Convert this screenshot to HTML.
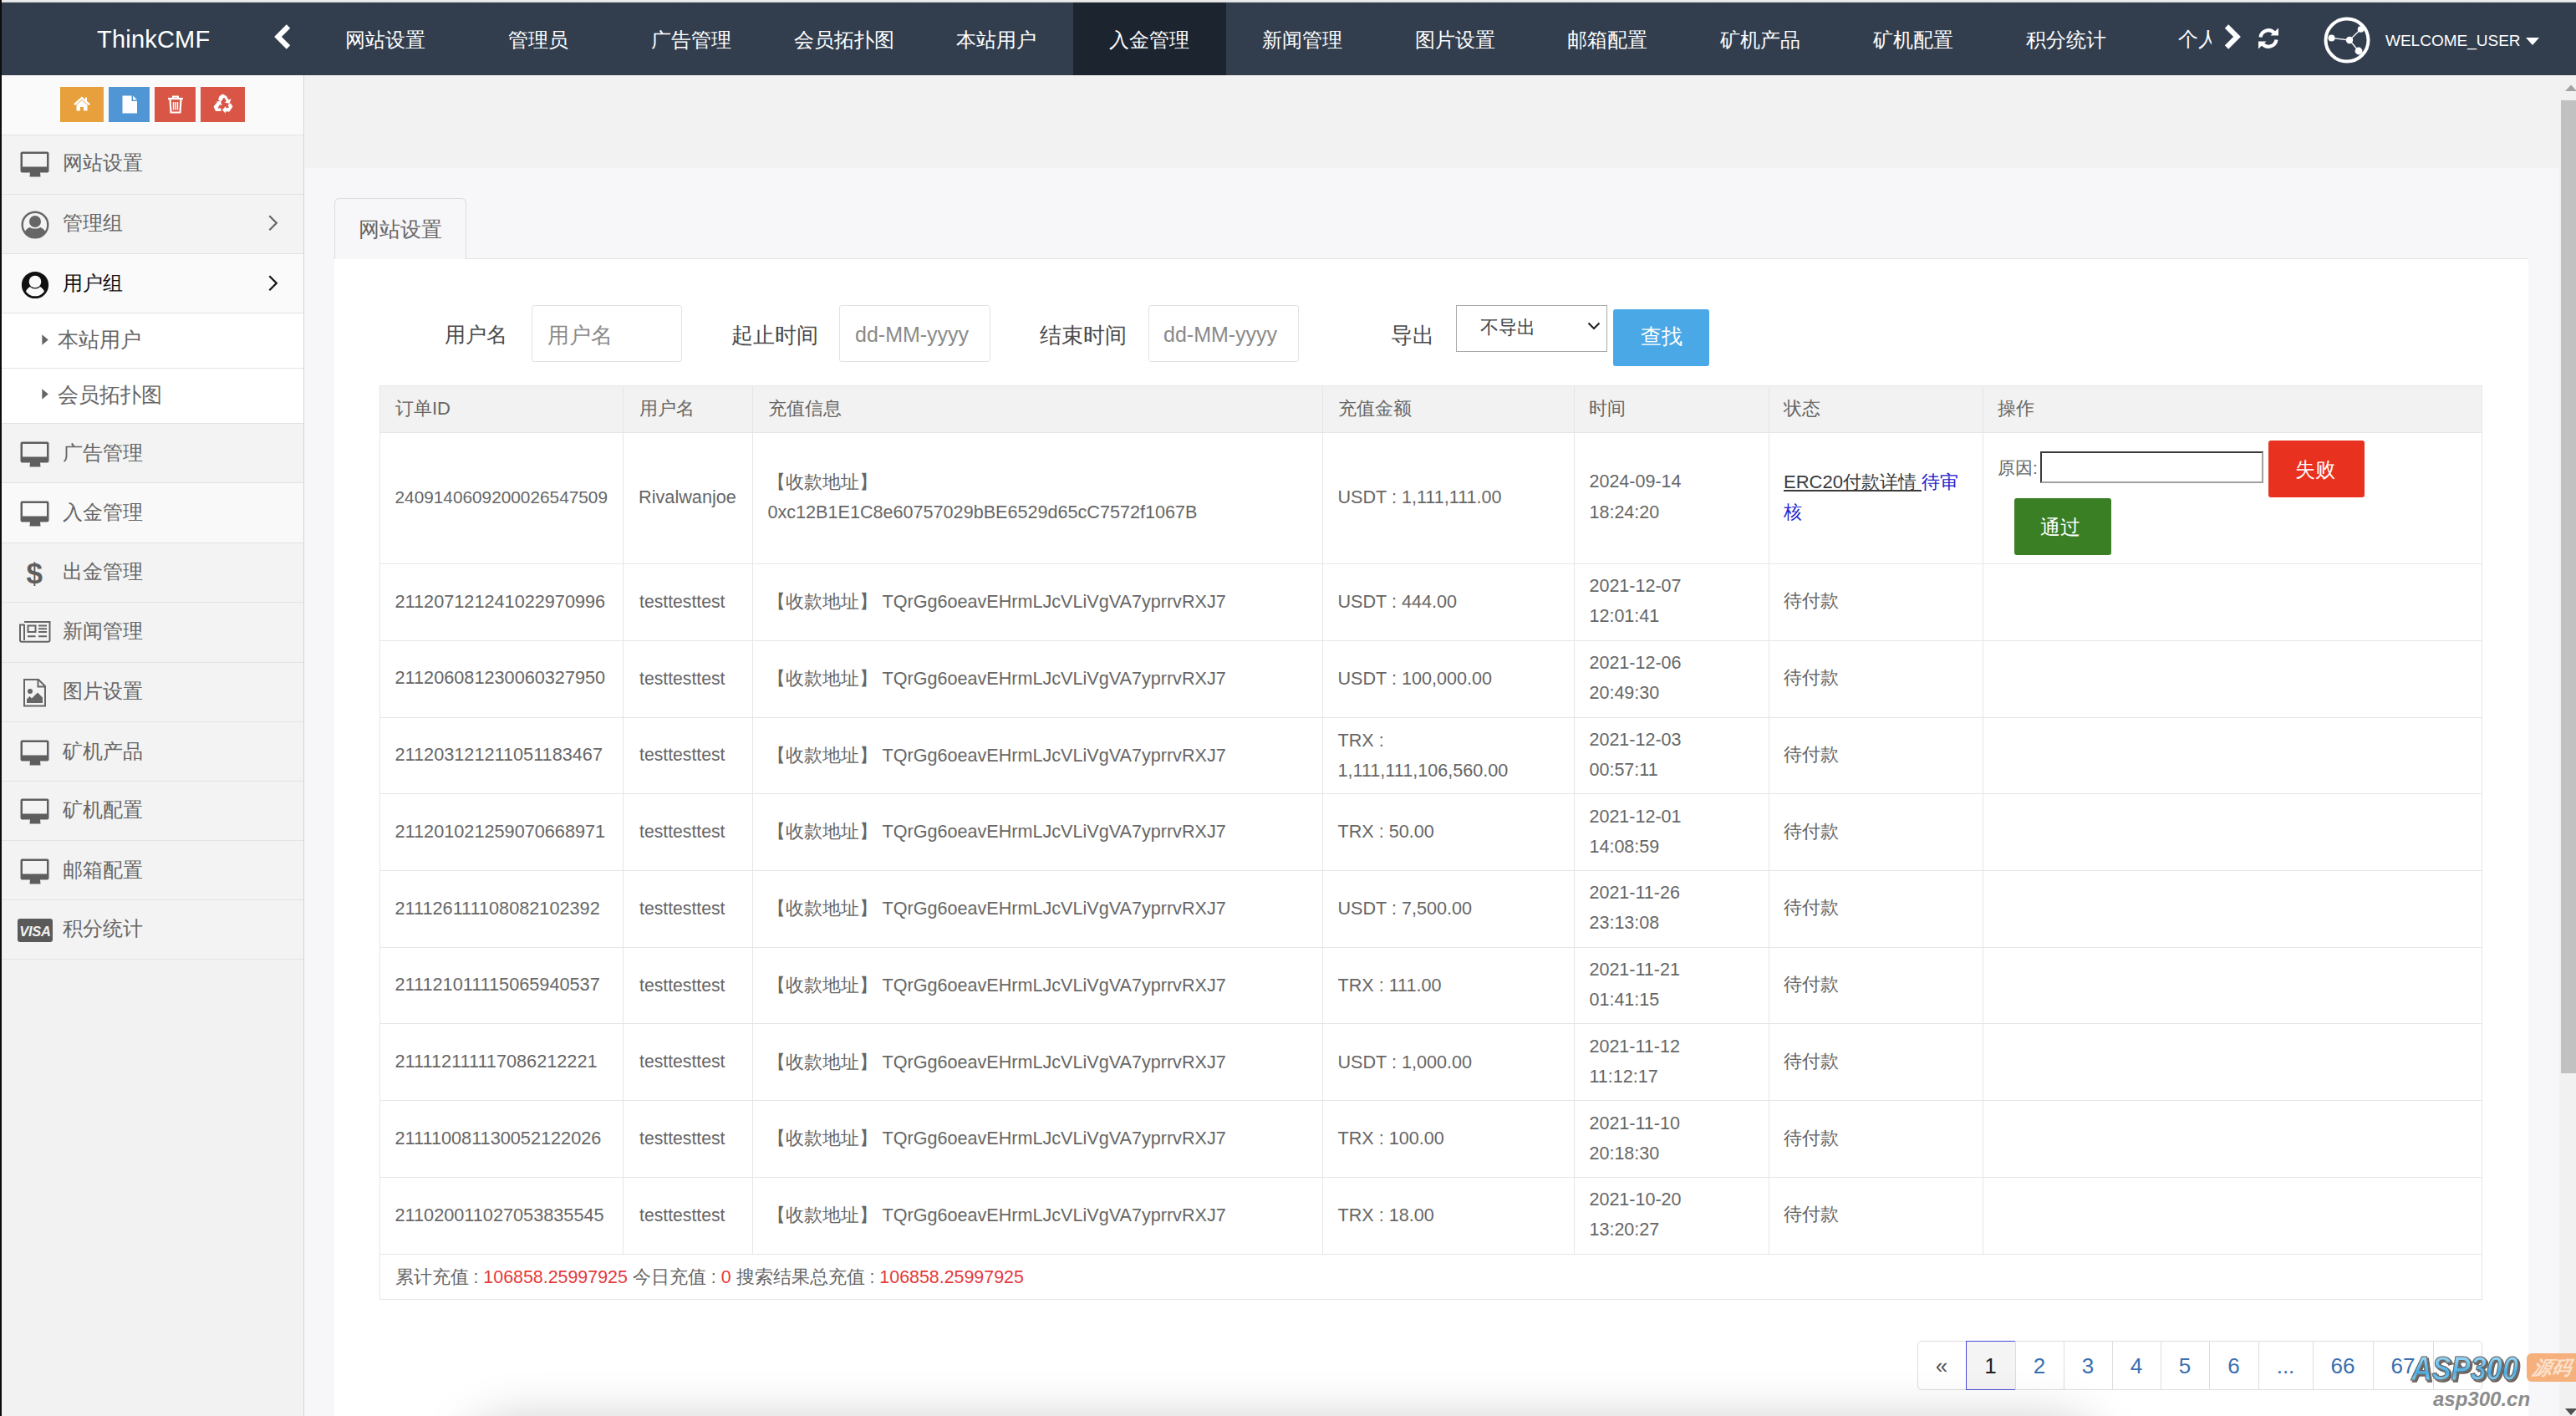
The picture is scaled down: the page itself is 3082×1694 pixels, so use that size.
<!DOCTYPE html>
<html><head><meta charset="utf-8">
<style>
*{box-sizing:border-box;margin:0;padding:0}
html,body{width:3082px;height:1694px;overflow:hidden}
body{position:relative;background:#f7f7f9;font-family:"Liberation Sans",sans-serif;color:#666}
.a{position:absolute}
.t{position:absolute;white-space:nowrap;line-height:40px;height:40px}
.hl{position:absolute;height:1px;background:#e6e6e6}
.vl{position:absolute;width:1px;background:#e6e6e6}
svg{position:absolute;overflow:visible}
</style></head><body>
<div class="a" style="left:0;top:0;width:3082px;height:3px;background:linear-gradient(#f0f0f0,#d6d8d9)"></div>
<div class="a" style="left:0;top:3px;width:3082px;height:87px;background:#323e4e"></div>
<div class="t" style="left:370.0px;top:27.5px;width:182.75px;text-align:center;font-size:24px;color:#fff">网站设置</div>
<div class="t" style="left:552.8px;top:27.5px;width:182.75px;text-align:center;font-size:24px;color:#fff">管理员</div>
<div class="t" style="left:735.5px;top:27.5px;width:182.75px;text-align:center;font-size:24px;color:#fff">广告管理</div>
<div class="t" style="left:918.2px;top:27.5px;width:182.75px;text-align:center;font-size:24px;color:#fff">会员拓扑图</div>
<div class="t" style="left:1101.0px;top:27.5px;width:182.75px;text-align:center;font-size:24px;color:#fff">本站用户</div>
<div class="a" style="left:1283.8px;top:3px;width:182.75px;height:87px;background:#1c2430"></div>
<div class="t" style="left:1283.8px;top:27.5px;width:182.75px;text-align:center;font-size:24px;color:#fff">入金管理</div>
<div class="t" style="left:1466.5px;top:27.5px;width:182.75px;text-align:center;font-size:24px;color:#fff">新闻管理</div>
<div class="t" style="left:1649.2px;top:27.5px;width:182.75px;text-align:center;font-size:24px;color:#fff">图片设置</div>
<div class="t" style="left:1832.0px;top:27.5px;width:182.75px;text-align:center;font-size:24px;color:#fff">邮箱配置</div>
<div class="t" style="left:2014.8px;top:27.5px;width:182.75px;text-align:center;font-size:24px;color:#fff">矿机产品</div>
<div class="t" style="left:2197.5px;top:27.5px;width:182.75px;text-align:center;font-size:24px;color:#fff">矿机配置</div>
<div class="t" style="left:2380.2px;top:27.5px;width:182.75px;text-align:center;font-size:24px;color:#fff">积分统计</div>
<div class="a" style="left:2606px;top:20px;width:40px;height:60px;overflow:hidden"><div class="t" style="left:0;top:7px;font-size:24px;color:#fff">个人中心</div></div>
<div class="t" style="left:116px;top:26.7px;font-size:29px;color:#fff;letter-spacing:0.2px">ThinkCMF</div>
<svg style="left:326px;top:28px" width="24" height="34" viewBox="0 0 24 34"><path d="M19 3.5 L6.5 16 L19 28.5" fill="none" stroke="#fff" stroke-width="6.2" stroke-linecap="butt" stroke-linejoin="miter"/></svg>
<svg style="left:2659px;top:28px" width="24" height="34" viewBox="0 0 24 34"><path d="M5 3.5 L17.5 16 L5 28.5" fill="none" stroke="#fff" stroke-width="6.2" stroke-linejoin="miter"/></svg>
<svg style="left:2700px;top:33px" width="28" height="26" viewBox="0 0 28 26">
<path d="M4.5 11.5 A9.5 9.5 0 0 1 21 6.5" fill="none" stroke="#fff" stroke-width="4.2"/>
<path d="M16.5 9.5 L26 9.5 L26 0.5 Z" fill="#fff"/>
<path d="M23.5 14.5 A9.5 9.5 0 0 1 7 19.5" fill="none" stroke="#fff" stroke-width="4.2"/>
<path d="M11.5 16.5 L2 16.5 L2 25.5 Z" fill="#fff"/>
</svg>
<svg style="left:2780px;top:20px" width="56" height="56" viewBox="0 0 56 56">
<circle cx="28" cy="28" r="25.5" fill="none" stroke="#fff" stroke-width="4"/>
<path d="M9.5 25.5 L31 28 L44.5 15 M31 28 L42 41" fill="none" stroke="#fff" stroke-width="1.6" opacity="0.9"/>
<circle cx="9.5" cy="25.5" r="4" fill="#fff"/>
<circle cx="31" cy="28" r="4.2" fill="#fff"/>
<circle cx="44.5" cy="15" r="3.8" fill="#fff"/>
<circle cx="42" cy="41" r="4.4" fill="#fff"/>
</svg>
<div class="t" style="left:2854px;top:29.2px;font-size:19px;color:#fff;">WELCOME_USER</div>
<svg style="left:3022px;top:45px" width="16" height="9" viewBox="0 0 16 9"><path d="M0 0 L16 0 L8 9 Z" fill="#fff"/></svg>
<div class="a" style="left:0;top:90px;width:364px;height:1604px;background:#f2f2f2;border-right:1px solid #d6d6d6"></div>
<div class="a" style="left:0;top:90px;width:363px;height:71px;background:#fafafa"></div>
<div class="a" style="left:72px;top:104px;width:52px;height:42px;background:#e8a03c"></div>
<div class="a" style="left:130px;top:104px;width:49px;height:42px;background:#5096d4"></div>
<div class="a" style="left:185px;top:104px;width:49px;height:42px;background:#d95545"></div>
<div class="a" style="left:240px;top:104px;width:53px;height:42px;background:#d95545"></div>
<svg style="left:87px;top:114px" width="22" height="20" viewBox="0 0 22 20">
<path d="M11 1.5 L1 10.5 L3 12 L11 5 L19 12 L21 10.5 L17 7 L17 2.5 L15 2.5 L15 5.2 Z" fill="#fff"/>
<path d="M4.5 11.5 L11 6 L17.5 11.5 L17.5 18.5 L13 18.5 L13 14 L9 14 L9 18.5 L4.5 18.5 Z" fill="#fff"/>
</svg>
<svg style="left:145px;top:113px" width="20" height="24" viewBox="0 0 20 24">
<path d="M1.5 1.5 L12.5 1.5 L12.5 8 L19 8 L19 22.5 L1.5 22.5 Z" fill="#fff"/>
<path d="M14 1.5 L19 6.5 L14 6.5 Z" fill="#fff"/>
</svg>
<svg style="left:199px;top:113px" width="22" height="24" viewBox="0 0 22 24">
<path d="M2 5 L20 5" stroke="#fff" stroke-width="2.2"/>
<path d="M8 5 L8 2.5 L14 2.5 L14 5" fill="none" stroke="#fff" stroke-width="2"/>
<path d="M4.5 6 L5.5 21.5 L16.5 21.5 L17.5 6" fill="none" stroke="#fff" stroke-width="2.2"/>
<path d="M8.5 9 L8.5 18.5 M11 9 L11 18.5 M13.5 9 L13.5 18.5" stroke="#fff" stroke-width="1.5"/>
</svg>
<svg style="left:254px;top:112px" width="26" height="25" viewBox="0 0 26 25">
<g fill="#fff">
<path d="M8.5 3 L12.5 0.5 L17 3 L19.5 7.5 L22.5 6 L20.5 12 L14.5 10.5 L17 9 L14 4.5 L10.5 9.5 L7 7.5 Z"/>
<path d="M6 10 L1.5 15.5 L4 21 L10.5 21 L10.5 17.5 L6.5 17.5 L9 13 L11.5 14.5 L10 8.5 L4 10 Z"/>
<path d="M15 17.5 L15 21.5 L20.5 21.5 L24.5 15.5 L22 11.5 L18.5 13.5 L20 16.5 L16.5 17.5 L16 15 L12 19.5 L16 24 Z"/>
</g></svg>
<div class="a" style="left:0;top:161px;width:363px;height:71px;background:#f3f3f3;border-top:1px solid #e3e3e3"></div>
<div class="a" style="left:0;top:232px;width:363px;height:71px;background:#f3f3f3;border-top:1px solid #e3e3e3"></div>
<div class="a" style="left:0;top:303px;width:363px;height:71px;background:#fafafa;border-top:1px solid #e3e3e3"></div>
<div class="a" style="left:0;top:374px;width:363px;height:66px;background:#ffffff;border-top:1px solid #e3e3e3"></div>
<div class="a" style="left:0;top:440px;width:363px;height:66px;background:#ffffff;border-top:1px solid #e3e3e3"></div>
<div class="a" style="left:0;top:506px;width:363px;height:71px;background:#f3f3f3;border-top:1px solid #e3e3e3"></div>
<div class="a" style="left:0;top:577px;width:363px;height:72px;background:#f9f9f9;border-top:1px solid #e3e3e3"></div>
<div class="a" style="left:0;top:649px;width:363px;height:71px;background:#f3f3f3;border-top:1px solid #e3e3e3"></div>
<div class="a" style="left:0;top:720px;width:363px;height:72px;background:#f3f3f3;border-top:1px solid #e3e3e3"></div>
<div class="a" style="left:0;top:792px;width:363px;height:71px;background:#f3f3f3;border-top:1px solid #e3e3e3"></div>
<div class="a" style="left:0;top:863px;width:363px;height:71px;background:#f3f3f3;border-top:1px solid #e3e3e3"></div>
<div class="a" style="left:0;top:934px;width:363px;height:71px;background:#f3f3f3;border-top:1px solid #e3e3e3"></div>
<div class="a" style="left:0;top:1005px;width:363px;height:71px;background:#f3f3f3;border-top:1px solid #e3e3e3"></div>
<div class="a" style="left:0;top:1076px;width:363px;height:71px;background:#f3f3f3;border-top:1px solid #e3e3e3"></div>
<div class="a" style="left:0;top:1147px;width:363px;height:1px;background:#e3e3e3"></div>
<div class="t" style="left:75px;top:174.5px;font-size:24px;color:#666;">网站设置</div>
<svg style="left:24px;top:180.5px" width="36" height="31" viewBox="0 0 36 31">
<path d="M2.5 0.5 H32.5 A2 2 0 0 1 34.5 2.5 V23.5 A2 2 0 0 1 32.5 25.5 H2.5 A2 2 0 0 1 0.5 23.5 V2.5 A2 2 0 0 1 2.5 0.5 Z M3 3 V18.5 H32 V3 Z" fill="#5e5e5e" fill-rule="evenodd"/>
<path d="M12 25 H24 L24.5 30.5 H11.5 Z" fill="#5e5e5e"/></svg>
<div class="t" style="left:75px;top:247.0px;font-size:24px;color:#666;">管理组</div>
<svg style="left:25px;top:252.0px" width="34" height="34" viewBox="0 0 34 34">
<defs><clipPath id="cc1"><circle cx="17" cy="17" r="15"/></clipPath></defs>
<circle cx="17" cy="17" r="15.3" fill="none" stroke="#666" stroke-width="2.4"/>
<circle cx="17" cy="13" r="7" fill="#666"/>
<path d="M3 34 C3 24 8 20.5 11 20 C13 22 21 22 23 20 C26 20.5 31 24 31 34 Z" fill="#666" clip-path="url(#cc1)"/>
</svg>
<svg style="left:320px;top:257.0px" width="14" height="20" viewBox="0 0 14 20"><path d="M2.3 1.3 L10.8 9.8 L2.3 18.3" fill="none" stroke="#666" stroke-width="2.2"/></svg>
<div class="t" style="left:75px;top:318.7px;font-size:24px;color:#111;">用户组</div>
<svg style="left:25px;top:323.7px" width="34" height="34" viewBox="0 0 34 34">
<defs><clipPath id="cc2"><circle cx="17" cy="17" r="13.3"/></clipPath></defs>
<circle cx="17" cy="17" r="16.1" fill="#111"/>
<path d="M4 34 C4 24 9 19.5 11.5 19 C13.5 21.5 20.5 21.5 22.5 19 C25 19.5 30 24 30 34 Z" fill="#fafafa" clip-path="url(#cc2)"/>
<circle cx="17" cy="13" r="8.6" fill="#111"/>
<circle cx="17" cy="13" r="7.3" fill="#fafafa"/>
</svg>
<svg style="left:320px;top:328.7px" width="14" height="20" viewBox="0 0 14 20"><path d="M2.3 1.3 L10.8 9.8 L2.3 18.3" fill="none" stroke="#111" stroke-width="2.2"/></svg>
<div class="t" style="left:75px;top:521.5px;font-size:24px;color:#666;">广告管理</div>
<svg style="left:24px;top:527.5px" width="36" height="31" viewBox="0 0 36 31">
<path d="M2.5 0.5 H32.5 A2 2 0 0 1 34.5 2.5 V23.5 A2 2 0 0 1 32.5 25.5 H2.5 A2 2 0 0 1 0.5 23.5 V2.5 A2 2 0 0 1 2.5 0.5 Z M3 3 V18.5 H32 V3 Z" fill="#5e5e5e" fill-rule="evenodd"/>
<path d="M12 25 H24 L24.5 30.5 H11.5 Z" fill="#5e5e5e"/></svg>
<div class="t" style="left:75px;top:593.2px;font-size:24px;color:#666;">入金管理</div>
<svg style="left:24px;top:599.2px" width="36" height="31" viewBox="0 0 36 31">
<path d="M2.5 0.5 H32.5 A2 2 0 0 1 34.5 2.5 V23.5 A2 2 0 0 1 32.5 25.5 H2.5 A2 2 0 0 1 0.5 23.5 V2.5 A2 2 0 0 1 2.5 0.5 Z M3 3 V18.5 H32 V3 Z" fill="#5e5e5e" fill-rule="evenodd"/>
<path d="M12 25 H24 L24.5 30.5 H11.5 Z" fill="#5e5e5e"/></svg>
<div class="t" style="left:75px;top:663.7px;font-size:24px;color:#666;">出金管理</div>
<div class="t" style="left:31.5px;top:665.7px;font-size:35px;font-weight:bold;color:#5e5e5e;line-height:40px">$</div>
<div class="t" style="left:75px;top:734.6px;font-size:24px;color:#666;">新闻管理</div>
<svg style="left:23px;top:742.6px" width="38" height="26" viewBox="0 0 38 26">
<path d="M6 1 H36.5 V23 A1.8 1.8 0 0 1 34.7 24.8 H3 A2 2 0 0 1 1 22.8 V4.5 H6" fill="none" stroke="#666" stroke-width="2"/>
<path d="M6 4 V23" stroke="#666" stroke-width="2"/>
<rect x="10.5" y="5.5" width="9" height="7.5" fill="none" stroke="#666" stroke-width="2"/>
<path d="M23 5.5 H33 M23 9.3 H33 M23 13 H33 M10 18.3 H19.5 M23 18.3 H33" stroke="#666" stroke-width="2"/>
</svg>
<div class="t" style="left:75px;top:807.3px;font-size:24px;color:#666;">图片设置</div>
<svg style="left:28px;top:811.8px" width="28" height="34" viewBox="0 0 28 34">
<path d="M1 1 H18 L26 9 V32.5 H1 Z" fill="none" stroke="#666" stroke-width="2"/>
<path d="M17.5 1 V9.5 H26" fill="none" stroke="#666" stroke-width="2"/>
<circle cx="8" cy="15" r="3" fill="#666"/>
<path d="M4 29 V24.5 L7.5 21 L10 23.5 L17 16.5 L23 22.5 V29 Z" fill="#666"/>
</svg>
<div class="t" style="left:75px;top:878.8px;font-size:24px;color:#666;">矿机产品</div>
<svg style="left:24px;top:884.8px" width="36" height="31" viewBox="0 0 36 31">
<path d="M2.5 0.5 H32.5 A2 2 0 0 1 34.5 2.5 V23.5 A2 2 0 0 1 32.5 25.5 H2.5 A2 2 0 0 1 0.5 23.5 V2.5 A2 2 0 0 1 2.5 0.5 Z M3 3 V18.5 H32 V3 Z" fill="#5e5e5e" fill-rule="evenodd"/>
<path d="M12 25 H24 L24.5 30.5 H11.5 Z" fill="#5e5e5e"/></svg>
<div class="t" style="left:75px;top:949.4px;font-size:24px;color:#666;">矿机配置</div>
<svg style="left:24px;top:955.4px" width="36" height="31" viewBox="0 0 36 31">
<path d="M2.5 0.5 H32.5 A2 2 0 0 1 34.5 2.5 V23.5 A2 2 0 0 1 32.5 25.5 H2.5 A2 2 0 0 1 0.5 23.5 V2.5 A2 2 0 0 1 2.5 0.5 Z M3 3 V18.5 H32 V3 Z" fill="#5e5e5e" fill-rule="evenodd"/>
<path d="M12 25 H24 L24.5 30.5 H11.5 Z" fill="#5e5e5e"/></svg>
<div class="t" style="left:75px;top:1020.6px;font-size:24px;color:#666;">邮箱配置</div>
<svg style="left:24px;top:1026.6px" width="36" height="31" viewBox="0 0 36 31">
<path d="M2.5 0.5 H32.5 A2 2 0 0 1 34.5 2.5 V23.5 A2 2 0 0 1 32.5 25.5 H2.5 A2 2 0 0 1 0.5 23.5 V2.5 A2 2 0 0 1 2.5 0.5 Z M3 3 V18.5 H32 V3 Z" fill="#5e5e5e" fill-rule="evenodd"/>
<path d="M12 25 H24 L24.5 30.5 H11.5 Z" fill="#5e5e5e"/></svg>
<div class="t" style="left:75px;top:1091.2px;font-size:24px;color:#666;">积分统计</div>
<div class="a" style="left:21px;top:1099.2px;width:41.5px;height:27.5px;background:#5a5a5a;border-radius:3px"></div>
<div class="t" style="left:23px;top:1093.7px;width:38px;text-align:center;font-size:16.5px;font-weight:bold;font-style:italic;color:#f3f3f3;letter-spacing:-0.3px">VISA</div>
<div class="t" style="left:69px;top:386.1px;font-size:25px;color:#666;">本站用户</div>
<svg style="left:50px;top:399.6px" width="9" height="13" viewBox="0 0 9 13"><path d="M0.3 0.3 L7.8 6.5 L0.3 12.7 Z" fill="#666"/></svg>
<div class="t" style="left:69px;top:451.7px;font-size:25px;color:#666;">会员拓扑图</div>
<svg style="left:50px;top:465.2px" width="9" height="13" viewBox="0 0 9 13"><path d="M0.3 0.3 L7.8 6.5 L0.3 12.7 Z" fill="#666"/></svg>
<div class="a" style="left:364px;top:90px;width:2698px;height:111px;background:#f2f2f2"></div>
<div class="a" style="left:3062px;top:90px;width:20px;height:1604px;background:#f1f1f1"></div>
<div class="a" style="left:3064px;top:120px;width:18px;height:1164px;background:#c1c1c1"></div>
<svg style="left:3069px;top:100px" width="14" height="10" viewBox="0 0 14 10"><path d="M0 9 L7 1.5 L14 9 Z" fill="#a3a3a3"/></svg>
<svg style="left:3069px;top:1685px" width="14" height="10" viewBox="0 0 14 10"><path d="M0 0 L7 8 L14 0 Z" fill="#505050"/></svg>
<div class="a" style="left:400px;top:309px;width:2625px;height:1400px;background:#fff;border-top:1px solid #e3e3e3"></div>
<div class="a" style="left:400px;top:237px;width:158px;height:73px;border:1px solid #dcdcdc;border-bottom:none;border-radius:6px 6px 0 0;background:#f7f7f9"></div>
<div class="t" style="left:429px;top:253.8px;font-size:25px;color:#666;">网站设置</div>
<div class="t" style="left:532px;top:380.3px;font-size:25px;color:#4a4a4a;">用户名</div>
<div class="a" style="left:636px;top:365px;width:180px;height:68px;border:1px solid #e2e2e2;border-radius:3px;background:#fff"></div>
<div class="t" style="left:654.5px;top:380.6px;font-size:25.5px;color:#8a8a8a;">用户名</div>
<div class="t" style="left:875px;top:380.6px;font-size:25.5px;color:#4a4a4a;">起止时间</div>
<div class="a" style="left:1004px;top:365px;width:181px;height:68px;border:1px solid #e2e2e2;border-radius:3px;background:#fff"></div>
<div class="t" style="left:1023px;top:380.0px;font-size:25px;color:#8a8a8a;">dd-MM-yyyy</div>
<div class="t" style="left:1244px;top:380.6px;font-size:25.5px;color:#4a4a4a;">结束时间</div>
<div class="a" style="left:1374px;top:365px;width:180px;height:68px;border:1px solid #e2e2e2;border-radius:3px;background:#fff"></div>
<div class="t" style="left:1392px;top:380.0px;font-size:25px;color:#8a8a8a;">dd-MM-yyyy</div>
<div class="t" style="left:1664px;top:380.8px;font-size:25.5px;color:#4a4a4a;">导出</div>
<div class="a" style="left:1742px;top:365px;width:181px;height:56px;border:1px solid #a9a9a9;background:#fff"></div>
<div class="t" style="left:1771px;top:371.8px;font-size:21.5px;color:#444;">不导出</div>
<svg style="left:1899px;top:385px" width="16" height="10" viewBox="0 0 16 10"><path d="M1.5 1.5 L8 8 L14.5 1.5" fill="none" stroke="#222" stroke-width="2.2"/></svg>
<div class="a" style="left:1930px;top:370px;width:115px;height:68px;background:#4aa8e6;border-radius:3px"></div>
<div class="t" style="left:1963px;top:382.8px;font-size:24.5px;color:#fff;">查找</div>
<div class="a" style="left:454px;top:461px;width:2516px;height:56px;background:#f2f2f2"></div>
<div class="hl" style="left:454px;top:461px;width:2516px"></div>
<div class="hl" style="left:454px;top:517px;width:2516px"></div>
<div class="hl" style="left:454px;top:674px;width:2516px"></div>
<div class="hl" style="left:454px;top:766px;width:2516px"></div>
<div class="hl" style="left:454px;top:858px;width:2516px"></div>
<div class="hl" style="left:454px;top:949px;width:2516px"></div>
<div class="hl" style="left:454px;top:1041px;width:2516px"></div>
<div class="hl" style="left:454px;top:1133px;width:2516px"></div>
<div class="hl" style="left:454px;top:1224px;width:2516px"></div>
<div class="hl" style="left:454px;top:1316px;width:2516px"></div>
<div class="hl" style="left:454px;top:1408px;width:2516px"></div>
<div class="hl" style="left:454px;top:1500px;width:2516px"></div>
<div class="hl" style="left:454px;top:1554px;width:2516px"></div>
<div class="vl" style="left:454px;top:461px;height:1094px"></div>
<div class="vl" style="left:745px;top:461px;height:1039px"></div>
<div class="vl" style="left:900px;top:461px;height:1039px"></div>
<div class="vl" style="left:1582px;top:461px;height:1039px"></div>
<div class="vl" style="left:1883px;top:461px;height:1039px"></div>
<div class="vl" style="left:2116px;top:461px;height:1039px"></div>
<div class="vl" style="left:2372px;top:461px;height:1039px"></div>
<div class="vl" style="left:2969px;top:461px;height:1094px"></div>
<div class="t" style="left:473px;top:469.0px;font-size:22px;color:#666;">订单ID</div>
<div class="t" style="left:765px;top:469.0px;font-size:22px;color:#666;">用户名</div>
<div class="t" style="left:919px;top:469.0px;font-size:22px;color:#666;">充值信息</div>
<div class="t" style="left:1601px;top:469.0px;font-size:22px;color:#666;">充值金额</div>
<div class="t" style="left:1901px;top:469.0px;font-size:22px;color:#666;">时间</div>
<div class="t" style="left:2134px;top:469.0px;font-size:22px;color:#666;">状态</div>
<div class="t" style="left:2390px;top:469.0px;font-size:22px;color:#666;">操作</div>
<div class="t" style="left:472.5px;top:575.1px;font-size:20.8px;color:#666;">2409140609200026547509</div>
<div class="t" style="left:764px;top:575.4px;font-size:21.7px;color:#666;">Rivalwanjoe</div>
<div class="t" style="left:918px;top:556.5px;font-size:22px;color:#666;">【收款地址】</div>
<div class="t" style="left:918.5px;top:592.6px;font-size:21.6px;color:#666;">0xc12B1E1C8e60757029bBE6529d65cC7572f1067B</div>
<div class="t" style="left:1600.5px;top:575.4px;font-size:21.6px;color:#666;">USDT : 1,111,111.00</div>
<div class="t" style="left:1901.5px;top:555.9px;font-size:21.5px;color:#666;">2024-09-14</div>
<div class="t" style="left:1901.5px;top:592.5px;font-size:21.5px;color:#666;">18:24:20</div>
<div class="t" style="left:2134px;top:556.5px;font-size:22px;color:#333"><span style="text-decoration:underline;color:#3a3a3a">ERC20付款详情 </span><span style="color:#2222cc">待审</span></div>
<div class="t" style="left:2134px;top:593.0px;font-size:22px;color:#2222cc;">核</div>
<div class="t" style="left:2390px;top:539.5px;font-size:21px;color:#666;">原因:</div>
<div class="a" style="left:2441px;top:540px;width:267px;height:38px;border:2px solid #555;border-top-color:#3a3a3a;border-left-color:#3a3a3a;border-right-color:#a0a0a0;border-bottom-color:#a0a0a0;background:#fff"></div>
<div class="a" style="left:2714px;top:526.5px;width:115px;height:68px;background:#e8321f;border-radius:3px"></div>
<div class="t" style="left:2746px;top:542.0px;font-size:24px;color:#fff;">失败</div>
<div class="a" style="left:2409.5px;top:595.5px;width:116px;height:68px;background:#3a7f24;border-radius:3px"></div>
<div class="t" style="left:2441px;top:610.5px;font-size:24px;color:#fff;">通过</div>
<div class="t" style="left:472.5px;top:699.6px;font-size:21.7px;color:#666;">211207121241022970996</div>
<div class="t" style="left:765px;top:699.8px;font-size:21.2px;color:#666;">testtesttest</div>
<div class="t" style="left:918px;top:700.1px;font-size:22px;color:#666;">【收款地址】</div>
<div class="t" style="left:1055.5px;top:700.0px;font-size:21.6px;color:#666;">TQrGg6oeavEHrmLJcVLiVgVA7yprrvRXJ7</div>
<div class="t" style="left:1600.5px;top:700.0px;font-size:21.6px;color:#666;">USDT : 444.00</div>
<div class="t" style="left:1901.5px;top:681.2px;font-size:21.5px;color:#666;">2021-12-07</div>
<div class="t" style="left:1901.5px;top:717.2px;font-size:21.5px;color:#666;">12:01:41</div>
<div class="t" style="left:2133.5px;top:699.3px;font-size:22px;color:#666;">待付款</div>
<div class="t" style="left:472.5px;top:791.4px;font-size:21.7px;color:#666;">211206081230060327950</div>
<div class="t" style="left:765px;top:791.6px;font-size:21.2px;color:#666;">testtesttest</div>
<div class="t" style="left:918px;top:791.9px;font-size:22px;color:#666;">【收款地址】</div>
<div class="t" style="left:1055.5px;top:791.7px;font-size:21.6px;color:#666;">TQrGg6oeavEHrmLJcVLiVgVA7yprrvRXJ7</div>
<div class="t" style="left:1600.5px;top:791.7px;font-size:21.6px;color:#666;">USDT : 100,000.00</div>
<div class="t" style="left:1901.5px;top:773.0px;font-size:21.5px;color:#666;">2021-12-06</div>
<div class="t" style="left:1901.5px;top:809.0px;font-size:21.5px;color:#666;">20:49:30</div>
<div class="t" style="left:2133.5px;top:791.0px;font-size:22px;color:#666;">待付款</div>
<div class="t" style="left:472.5px;top:883.1px;font-size:21.7px;color:#666;">211203121211051183467</div>
<div class="t" style="left:765px;top:883.3px;font-size:21.2px;color:#666;">testtesttest</div>
<div class="t" style="left:918px;top:883.6px;font-size:22px;color:#666;">【收款地址】</div>
<div class="t" style="left:1055.5px;top:883.5px;font-size:21.6px;color:#666;">TQrGg6oeavEHrmLJcVLiVgVA7yprrvRXJ7</div>
<div class="t" style="left:1600.5px;top:865.5px;font-size:21.6px;color:#666;">TRX :</div>
<div class="t" style="left:1600.5px;top:901.7px;font-size:21.6px;color:#666;">1,111,111,106,560.00</div>
<div class="t" style="left:1901.5px;top:864.7px;font-size:21.5px;color:#666;">2021-12-03</div>
<div class="t" style="left:1901.5px;top:900.7px;font-size:21.5px;color:#666;">00:57:11</div>
<div class="t" style="left:2133.5px;top:882.8px;font-size:22px;color:#666;">待付款</div>
<div class="t" style="left:472.5px;top:974.9px;font-size:21.7px;color:#666;">211201021259070668971</div>
<div class="t" style="left:765px;top:975.1px;font-size:21.2px;color:#666;">testtesttest</div>
<div class="t" style="left:918px;top:975.4px;font-size:22px;color:#666;">【收款地址】</div>
<div class="t" style="left:1055.5px;top:975.2px;font-size:21.6px;color:#666;">TQrGg6oeavEHrmLJcVLiVgVA7yprrvRXJ7</div>
<div class="t" style="left:1600.5px;top:975.2px;font-size:21.6px;color:#666;">TRX : 50.00</div>
<div class="t" style="left:1901.5px;top:956.5px;font-size:21.5px;color:#666;">2021-12-01</div>
<div class="t" style="left:1901.5px;top:992.5px;font-size:21.5px;color:#666;">14:08:59</div>
<div class="t" style="left:2133.5px;top:974.5px;font-size:22px;color:#666;">待付款</div>
<div class="t" style="left:472.5px;top:1066.6px;font-size:21.7px;color:#666;">211126111108082102392</div>
<div class="t" style="left:765px;top:1066.8px;font-size:21.2px;color:#666;">testtesttest</div>
<div class="t" style="left:918px;top:1067.1px;font-size:22px;color:#666;">【收款地址】</div>
<div class="t" style="left:1055.5px;top:1067.0px;font-size:21.6px;color:#666;">TQrGg6oeavEHrmLJcVLiVgVA7yprrvRXJ7</div>
<div class="t" style="left:1600.5px;top:1067.0px;font-size:21.6px;color:#666;">USDT : 7,500.00</div>
<div class="t" style="left:1901.5px;top:1048.2px;font-size:21.5px;color:#666;">2021-11-26</div>
<div class="t" style="left:1901.5px;top:1084.2px;font-size:21.5px;color:#666;">23:13:08</div>
<div class="t" style="left:2133.5px;top:1066.3px;font-size:22px;color:#666;">待付款</div>
<div class="t" style="left:472.5px;top:1158.4px;font-size:21.7px;color:#666;">211121011115065940537</div>
<div class="t" style="left:765px;top:1158.6px;font-size:21.2px;color:#666;">testtesttest</div>
<div class="t" style="left:918px;top:1158.9px;font-size:22px;color:#666;">【收款地址】</div>
<div class="t" style="left:1055.5px;top:1158.7px;font-size:21.6px;color:#666;">TQrGg6oeavEHrmLJcVLiVgVA7yprrvRXJ7</div>
<div class="t" style="left:1600.5px;top:1158.7px;font-size:21.6px;color:#666;">TRX : 111.00</div>
<div class="t" style="left:1901.5px;top:1140.0px;font-size:21.5px;color:#666;">2021-11-21</div>
<div class="t" style="left:1901.5px;top:1176.0px;font-size:21.5px;color:#666;">01:41:15</div>
<div class="t" style="left:2133.5px;top:1158.1px;font-size:22px;color:#666;">待付款</div>
<div class="t" style="left:472.5px;top:1250.1px;font-size:21.7px;color:#666;">211112111117086212221</div>
<div class="t" style="left:765px;top:1250.3px;font-size:21.2px;color:#666;">testtesttest</div>
<div class="t" style="left:918px;top:1250.6px;font-size:22px;color:#666;">【收款地址】</div>
<div class="t" style="left:1055.5px;top:1250.5px;font-size:21.6px;color:#666;">TQrGg6oeavEHrmLJcVLiVgVA7yprrvRXJ7</div>
<div class="t" style="left:1600.5px;top:1250.5px;font-size:21.6px;color:#666;">USDT : 1,000.00</div>
<div class="t" style="left:1901.5px;top:1231.7px;font-size:21.5px;color:#666;">2021-11-12</div>
<div class="t" style="left:1901.5px;top:1267.7px;font-size:21.5px;color:#666;">11:12:17</div>
<div class="t" style="left:2133.5px;top:1249.8px;font-size:22px;color:#666;">待付款</div>
<div class="t" style="left:472.5px;top:1341.9px;font-size:21.7px;color:#666;">211110081130052122026</div>
<div class="t" style="left:765px;top:1342.1px;font-size:21.2px;color:#666;">testtesttest</div>
<div class="t" style="left:918px;top:1342.4px;font-size:22px;color:#666;">【收款地址】</div>
<div class="t" style="left:1055.5px;top:1342.2px;font-size:21.6px;color:#666;">TQrGg6oeavEHrmLJcVLiVgVA7yprrvRXJ7</div>
<div class="t" style="left:1600.5px;top:1342.2px;font-size:21.6px;color:#666;">TRX : 100.00</div>
<div class="t" style="left:1901.5px;top:1323.5px;font-size:21.5px;color:#666;">2021-11-10</div>
<div class="t" style="left:1901.5px;top:1359.5px;font-size:21.5px;color:#666;">20:18:30</div>
<div class="t" style="left:2133.5px;top:1341.6px;font-size:22px;color:#666;">待付款</div>
<div class="t" style="left:472.5px;top:1433.6px;font-size:21.7px;color:#666;">211020011027053835545</div>
<div class="t" style="left:765px;top:1433.8px;font-size:21.2px;color:#666;">testtesttest</div>
<div class="t" style="left:918px;top:1434.1px;font-size:22px;color:#666;">【收款地址】</div>
<div class="t" style="left:1055.5px;top:1434.0px;font-size:21.6px;color:#666;">TQrGg6oeavEHrmLJcVLiVgVA7yprrvRXJ7</div>
<div class="t" style="left:1600.5px;top:1434.0px;font-size:21.6px;color:#666;">TRX : 18.00</div>
<div class="t" style="left:1901.5px;top:1415.2px;font-size:21.5px;color:#666;">2021-10-20</div>
<div class="t" style="left:1901.5px;top:1451.2px;font-size:21.5px;color:#666;">13:20:27</div>
<div class="t" style="left:2133.5px;top:1433.3px;font-size:22px;color:#666;">待付款</div>
<div class="t" style="left:472.5px;top:1507.9px;font-size:21.4px;color:#666"><span style="font-size:22px">累计充值</span> : <span style="color:#e4393c">106858.25997925</span> <span style="font-size:22px">今日充值</span> : <span style="color:#e4393c">0</span> <span style="font-size:22px">搜索结果总充值</span> : <span style="color:#e4393c">106858.25997925</span></div>
<div class="a" style="left:2294px;top:1604px;width:676px;height:59px;border:1px solid #dddddd;border-radius:5px;background:#fff"></div>
<div class="t" style="left:2294px;top:1613.8px;width:58px;text-align:center;font-size:26px;color:#555">«</div>
<div class="vl" style="left:2352px;top:1604px;height:59px;background:#dddddd"></div>
<div class="a" style="left:2352px;top:1604px;width:60px;height:59px;border:1px solid #4b4bd8;background:#f4f4f4"></div>
<div class="t" style="left:2352px;top:1613.8px;width:59px;text-align:center;font-size:26px;color:#222">1</div>
<div class="vl" style="left:2411px;top:1604px;height:59px;background:#dddddd"></div>
<div class="t" style="left:2411px;top:1613.8px;width:58px;text-align:center;font-size:26px;color:#3a6fb0">2</div>
<div class="vl" style="left:2469px;top:1604px;height:59px;background:#dddddd"></div>
<div class="t" style="left:2469px;top:1613.8px;width:58px;text-align:center;font-size:26px;color:#3a6fb0">3</div>
<div class="vl" style="left:2527px;top:1604px;height:59px;background:#dddddd"></div>
<div class="t" style="left:2527px;top:1613.8px;width:58px;text-align:center;font-size:26px;color:#3a6fb0">4</div>
<div class="vl" style="left:2585px;top:1604px;height:59px;background:#dddddd"></div>
<div class="t" style="left:2585px;top:1613.8px;width:58px;text-align:center;font-size:26px;color:#3a6fb0">5</div>
<div class="vl" style="left:2643px;top:1604px;height:59px;background:#dddddd"></div>
<div class="t" style="left:2643px;top:1613.8px;width:59px;text-align:center;font-size:26px;color:#3a6fb0">6</div>
<div class="vl" style="left:2702px;top:1604px;height:59px;background:#dddddd"></div>
<div class="t" style="left:2702px;top:1613.8px;width:65px;text-align:center;font-size:26px;color:#3a6fb0">...</div>
<div class="vl" style="left:2767px;top:1604px;height:59px;background:#dddddd"></div>
<div class="t" style="left:2767px;top:1613.8px;width:72px;text-align:center;font-size:26px;color:#3a6fb0">66</div>
<div class="vl" style="left:2839px;top:1604px;height:59px;background:#dddddd"></div>
<div class="t" style="left:2839px;top:1613.8px;width:72px;text-align:center;font-size:26px;color:#3a6fb0">67</div>
<div class="vl" style="left:2911px;top:1604px;height:59px;background:#dddddd"></div>
<div class="t" style="left:2911px;top:1613.8px;width:59px;text-align:center;font-size:26px;color:#3a6fb0">»</div>
<div class="a" style="left:560px;top:1712px;width:1950px;height:200px;border-radius:60px;box-shadow:0 0 60px 14px rgba(0,0,0,0.2)"></div>
<div class="t" style="left:2886.5px;top:1618.5px;font-size:40px;line-height:40px;font-weight:bold;font-style:italic;color:#6e625c;-webkit-text-stroke:1.4px #6e625c;transform:scaleX(0.86);transform-origin:0 0">ASP300</div>
<div class="t" style="left:2885px;top:1617px;font-size:40px;line-height:40px;font-weight:bold;font-style:italic;color:transparent;background:linear-gradient(180deg,#b5e4fa 0%,#62bdee 45%,#4aaee6 62%,#a6ddf6 100%);-webkit-background-clip:text;background-clip:text;-webkit-text-stroke:1.2px #6e625c;transform:scaleX(0.86);transform-origin:0 0">ASP300</div>
<div class="a" style="left:3023px;top:1619px;width:66px;height:34px;background:#f5b07c;border-radius:6px"></div>
<div class="t" style="left:3031px;top:1616px;font-size:23px;font-style:italic;font-weight:bold;color:#fbe0cc;transform:skewX(-12deg)">源码</div>
<div class="t" style="left:2911px;top:1654px;font-size:24px;line-height:40px;font-weight:bold;font-style:italic;color:#8c8c8c">asp300.cn</div>
<div class="a" style="left:0;top:0;width:2px;height:1694px;background:#0c0c0c"></div>
</body></html>
